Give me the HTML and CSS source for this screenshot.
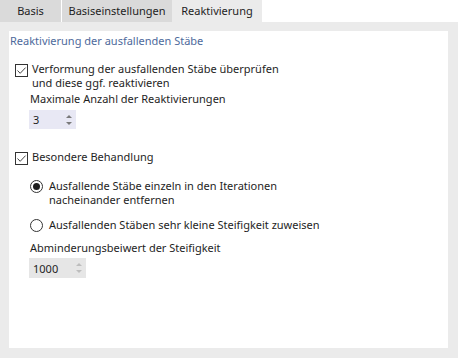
FILE: index.html
```html
<!DOCTYPE html>
<html lang="de">
<head>
    <meta charset="UTF-8">
    <title>Reaktivierung</title>
    <link rel="stylesheet" href="styles.css">
</head>
<body>
    <div class="tabs">
        <div class="tab tab-basis">Basis</div>
        <div class="tab tab-einst">Basiseinstellungen</div>
        <div class="tab tab-active">Reaktivierung</div>
    </div>
    <div class="frame">
        <div class="panel">
            <div class="title">Reaktivierung der ausfallenden Stäbe</div>

            <div class="check-row first">
                <span class="checkbox"><svg width="11" height="11" viewBox="0 0 11 11"><path d="M1.5 5.5 L4.2 8.3 L9.6 2.6" fill="none" stroke="#444444" stroke-width="1"/></svg></span>
                <div class="text">
                    <div class="line">Verformung der ausfallenden Stäbe überprüfen</div>
                    <div class="line">und diese ggf. reaktivieren</div>
                </div>
            </div>

            <div class="label lbl-max">Maximale Anzahl der Reaktivierungen</div>
            <div class="spin spin-max">
                <span class="value">3</span>
                <span class="arrows"><span class="up"></span><span class="down"></span></span>
            </div>

            <div class="check-row second">
                <span class="checkbox"><svg width="11" height="11" viewBox="0 0 11 11"><path d="M1.5 5.5 L4.2 8.3 L9.6 2.6" fill="none" stroke="#444444" stroke-width="1"/></svg></span>
                <div class="text"><div class="line">Besondere Behandlung</div></div>
            </div>

            <div class="radio-row r1">
                <span class="radio checked"></span>
                <div class="text">
                    <div class="line">Ausfallende Stäbe einzeln in den Iterationen</div>
                    <div class="line">nacheinander entfernen</div>
                </div>
            </div>
            <div class="radio-row r2">
                <span class="radio"></span>
                <div class="text"><div class="line">Ausfallenden Stäben sehr kleine Steifigkeit zuweisen</div></div>
            </div>

            <div class="label lbl-abm">Abminderungsbeiwert der Steifigkeit</div>
            <div class="spin spin-abm disabled">
                <span class="value">1000</span>
                <span class="arrows"><span class="up"></span><span class="down"></span></span>
            </div>
        </div>
    </div>
</body>
</html>
```

FILE: styles.css
```css
body { margin: 0; background: #ffffff; font-family: "Noto Sans", "Liberation Sans", sans-serif; font-size: 11px; color: #1e1e1e; width: 458px; height: 358px; overflow: hidden; }
.tabs { display: flex; height: 22px; background: #ffffff; }
.tab { height: 22px; line-height: 22px; text-align: center; background: #dadada; }
.tab-basis { width: 61px; margin-right: 1px; }
.tab-einst { width: 110px; }
.tab-active { width: 90px; background: #ebebeb; }
.frame { background: #ebebeb; padding: 9px 10px 10px 9px; height: 317px; }
.panel { background: #ffffff; height: 317px; display: flex; flex-direction: column; align-items: flex-start; }
.title { color: #4e6a9c; line-height: 14px; margin: 3px 0 0 1px; }
.line { line-height: 14px; height: 14px; }
.check-row { display: flex; align-items: flex-start; margin-left: 6px; }
.check-row.first { margin-top: 14px; }
.check-row.second { margin-top: 21px; }
.checkbox { width: 11px; height: 11px; border: 1px solid #333333; margin-top: 2px; margin-right: 4px; display: flex; flex-shrink: 0; }
.label { line-height: 14px; margin-left: 21px; }
.lbl-max { margin-top: 2px; }
.lbl-abm { margin-top: 9px; }
.spin { display: flex; align-items: center; justify-content: space-between; margin-left: 20px; height: 19px; background: #e8e8f4; padding: 0 4px 0 4px; box-sizing: border-box; }
.spin-max { width: 47px; margin-top: 4px; }
.spin-abm { width: 57px; height: 20px; margin-top: 3px; background: #e6e6e6; }
.value { line-height: 19px; }
.arrows { display: flex; flex-direction: column; gap: 4px; }
.up { width: 0; height: 0; border-left: 3px solid transparent; border-right: 3px solid transparent; border-bottom: 3px solid #7a7a7a; }
.down { width: 0; height: 0; border-left: 3px solid transparent; border-right: 3px solid transparent; border-top: 3px solid #7a7a7a; }
.disabled .up { border-bottom-color: #bdbdbd; }
.disabled .down { border-top-color: #bdbdbd; }
.radio-row { display: flex; align-items: flex-start; margin-left: 21px; }
.radio-row.r1 { margin-top: 14px; }
.radio-row.r2 { margin-top: 11px; }
.radio { width: 11px; height: 11px; border: 1px solid #333333; border-radius: 50%; margin-top: 1px; margin-right: 6px; position: relative; flex-shrink: 0; }
.radio.checked::after { content: ""; position: absolute; left: 2px; top: 2px; width: 7px; height: 7px; border-radius: 50%; background: #1e1e1e; }
```
